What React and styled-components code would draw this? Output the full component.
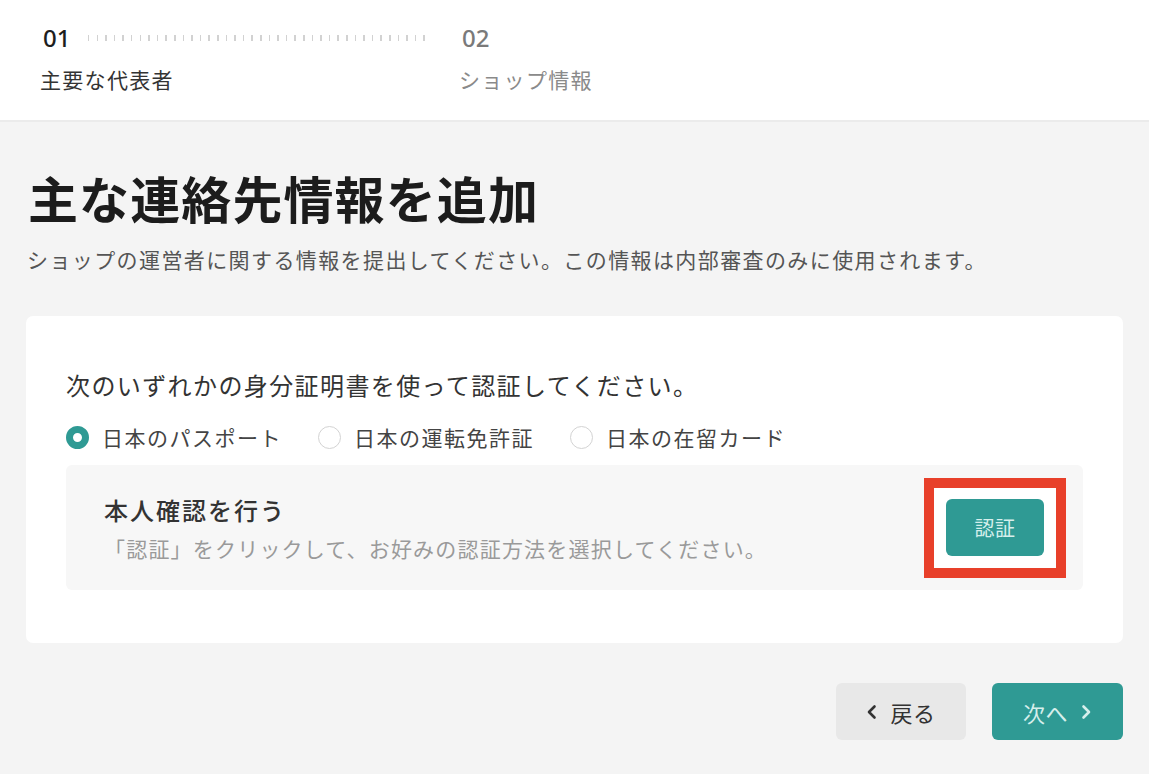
import React, { useState } from "react";
import styled, { createGlobalStyle } from "styled-components";

const GlobalStyle = createGlobalStyle`
  html, body { margin: 0; padding: 0; }
  body {
    background: #f4f4f4;
    font-family: "Noto Sans CJK JP", "Noto Sans", sans-serif;
    color: #222;
    width: 1149px;
    min-height: 774px;
  }
  * { box-sizing: border-box; }
`;

const TEAL = "#2f9a94";

const Header = styled.header`
  background: #fff;
  height: 122px;
  border-bottom: 2px solid #ebebeb;
  padding: 24px 0 0 40px;
  display: flex;
`;

const Step = styled.div`
  display: flex;
  flex-direction: column;
  gap: 12px;
  width: ${(p) => (p.$grow ? "419px" : "auto")};
`;

const StepTop = styled.div`
  display: flex;
  align-items: center;
  height: 28px;
`;

const StepNum = styled.span`
  font-size: 24px;
  line-height: 28px;
  font-weight: 500;
  color: ${(p) => (p.$active ? "#1e1e1e" : "#7a7a7a")};
  padding-left: 3px;
  font-family: "Noto Sans", "Noto Sans CJK JP", sans-serif;
`;

const Dots = styled.div`
  flex: 1;
  height: 6px;
  margin: 0 30px 0 18px;
  background: repeating-linear-gradient(
    90deg,
    #d2d2d2 0 1.5px,
    transparent 1.5px 8.6px
  );
`;

const StepLabel = styled.span`
  font-size: 21px;
  line-height: 30px;
  letter-spacing: 1.3px;
  color: ${(p) => (p.$active ? "#333" : "#8a8a8a")};
`;

const Main = styled.main`
  padding: 44px 26px 40px;
`;

const Title = styled.h1`
  margin: 0;
  font-size: 50px;
  line-height: 62px;
  font-weight: 700;
  letter-spacing: 1.1px;
  color: #1c1c1c;
  padding-left: 2px;
`;

const Subtitle = styled.p`
  margin: 16px 0 0;
  font-size: 21px;
  line-height: 30px;
  letter-spacing: 1.4px;
  color: #555;
  padding-left: 1px;
`;

const Card = styled.section`
  margin-top: 42px;
  background: #fff;
  border-radius: 7px;
  padding: 53px 40px 53px;
`;

const Question = styled.p`
  margin: 0;
  font-size: 24px;
  line-height: 32px;
  letter-spacing: 1.4px;
  color: #333;
`;

const RadioRow = styled.div`
  display: flex;
  align-items: center;
  gap: 36px;
  margin-top: 21px;
  height: 30px;
`;

const RadioOption = styled.label`
  display: flex;
  align-items: center;
  gap: 13px;
  cursor: pointer;
  font-size: 21px;
  letter-spacing: 1.5px;
  color: #444;
`;

const RadioDot = styled.span`
  width: 23px;
  height: 23px;
  border-radius: 50%;
  flex-shrink: 0;
  border: ${(p) => (p.$checked ? `7.5px solid ${TEAL}` : "1.5px solid #d3d3d3")};
  background: #fff;
`;

const VerifyPanel = styled.div`
  margin-top: 13px;
  height: 125px;
  background: #f7f7f7;
  border-radius: 6px;
  padding: 0 39px 0 38px;
  display: flex;
  align-items: center;
  justify-content: space-between;
`;

const PanelText = styled.div`
  display: flex;
  flex-direction: column;
  gap: 8px;
`;

const PanelHeading = styled.span`
  font-size: 24px;
  line-height: 32px;
  letter-spacing: 2px;
  font-weight: 500;
  color: #333;
`;

const PanelSub = styled.span`
  font-size: 21px;
  line-height: 28px;
  letter-spacing: 1.2px;
  color: #9a9a9a;
`;

const Highlight = styled.div`
  position: relative;
  isolation: isolate;
  &::before {
    content: "";
    position: absolute;
    inset: -21px -22px -22px -22px;
    background: #fff;
    border: 10px solid #e8402a;
    z-index: -1;
  }
`;

const Button = styled.button`
  height: 57px;
  border: none;
  border-radius: 6px;
  font-family: inherit;
  font-size: ${(p) => p.$fs || 22}px;
  letter-spacing: 0.5px;
  display: inline-flex;
  align-items: center;
  justify-content: center;
  gap: 12px;
  cursor: pointer;
  width: ${(p) => p.$w}px;
  background: ${(p) => (p.$variant === "primary" ? TEAL : "#e8e8e8")};
  color: ${(p) => (p.$variant === "primary" ? "#d6efec" : "#333")};
`;

const Footer = styled.div`
  display: flex;
  justify-content: flex-end;
  gap: 26px;
  margin-top: 40px;
`;

const Chevron = ({ dir }) => (
  <svg width="12" height="16" viewBox="0 0 12 16" aria-hidden="true">
    <path
      d={dir === "left" ? "M8.5 2.5 L3 8 L8.5 13.5" : "M3.5 2.5 L9 8 L3.5 13.5"}
      fill="none"
      stroke="currentColor"
      strokeWidth="2.6"
      strokeLinecap="round"
      strokeLinejoin="round"
    />
  </svg>
);

const options = ["日本のパスポート", "日本の運転免許証", "日本の在留カード"];

export default function App() {
  const [selected, setSelected] = useState(0);
  return (
    <>
      <GlobalStyle />
      <Header>
        <Step $grow>
          <StepTop>
            <StepNum $active>01</StepNum>
            <Dots />
          </StepTop>
          <StepLabel $active>主要な代表者</StepLabel>
        </Step>
        <Step>
          <StepTop>
            <StepNum>02</StepNum>
          </StepTop>
          <StepLabel>ショップ情報</StepLabel>
        </Step>
      </Header>
      <Main>
        <Title>主な連絡先情報を追加</Title>
        <Subtitle>
          ショップの運営者に関する情報を提出してください。この情報は内部審査のみに使用されます。
        </Subtitle>
        <Card>
          <Question>次のいずれかの身分証明書を使って認証してください。</Question>
          <RadioRow>
            {options.map((o, i) => (
              <RadioOption key={o} onClick={() => setSelected(i)}>
                <RadioDot $checked={selected === i} />
                {o}
              </RadioOption>
            ))}
          </RadioRow>
          <VerifyPanel>
            <PanelText>
              <PanelHeading>本人確認を行う</PanelHeading>
              <PanelSub>「認証」をクリックして、お好みの認証方法を選択してください。</PanelSub>
            </PanelText>
            <Highlight>
              <Button $variant="primary" $w={98} $fs={20}>認証</Button>
            </Highlight>
          </VerifyPanel>
        </Card>
        <Footer>
          <Button $w={130}>
            <Chevron dir="left" />
            戻る
          </Button>
          <Button $variant="primary" $w={131}>
            次へ
            <Chevron dir="right" />
          </Button>
        </Footer>
      </Main>
    </>
  );
}
